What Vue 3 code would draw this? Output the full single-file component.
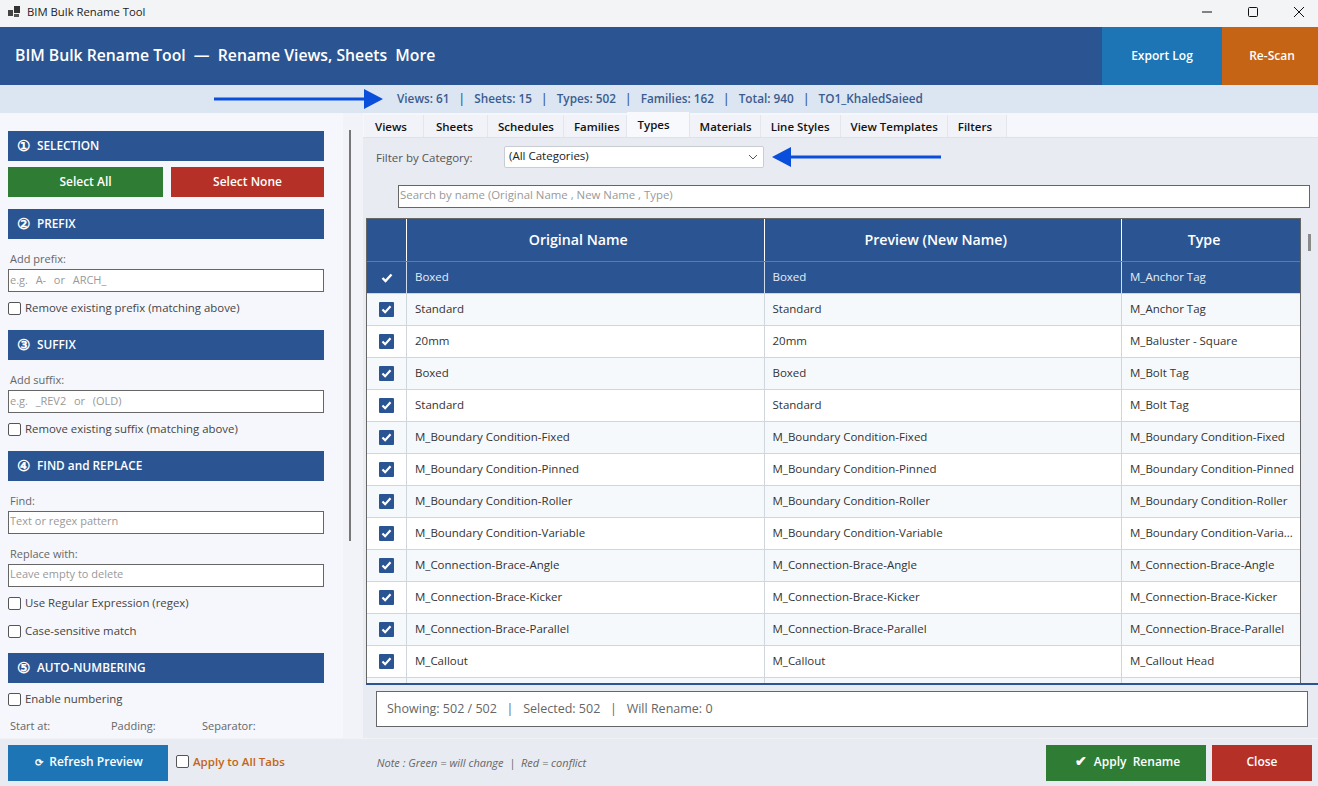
<script setup>
import { ref } from "vue";

const tabs = ["Views", "Sheets", "Schedules", "Families", "Types", "Materials", "Line Styles", "View Templates", "Filters"];
const activeTab = ref("Types");

const rows = [
  ["Boxed", "M_Anchor Tag"],
  ["Standard", "M_Anchor Tag"],
  ["20mm", "M_Baluster - Square"],
  ["Boxed", "M_Bolt Tag"],
  ["Standard", "M_Bolt Tag"],
  ["M_Boundary Condition-Fixed", "M_Boundary Condition-Fixed"],
  ["M_Boundary Condition-Pinned", "M_Boundary Condition-Pinned"],
  ["M_Boundary Condition-Roller", "M_Boundary Condition-Roller"],
  ["M_Boundary Condition-Variable", "M_Boundary Condition-Varia..."],
  ["M_Connection-Brace-Angle", "M_Connection-Brace-Angle"],
  ["M_Connection-Brace-Kicker", "M_Connection-Brace-Kicker"],
  ["M_Connection-Brace-Parallel", "M_Connection-Brace-Parallel"],
  ["M_Callout", "M_Callout Head"],
  ["", ""],
];
</script>

<template>
  <div class="window">
    <div class="titlebar">
      <svg class="app-icon" width="13" height="12" viewBox="0 0 13 12">
        <rect x="0" y="4" width="5" height="6" fill="#444" />
        <rect x="6" y="0" width="6" height="7" fill="#333" />
        <rect x="6" y="8" width="5" height="3" fill="#555" />
      </svg>
      <span class="title-text">BIM Bulk Rename Tool</span>
      <div class="win-controls">
        <svg width="12" height="12" viewBox="0 0 12 12"><path d="M1 6h10" stroke="#111" stroke-width="1" /></svg>
        <svg width="12" height="12" viewBox="0 0 12 12"><rect x="1.5" y="1.5" width="9" height="9" rx="1" fill="none" stroke="#111" /></svg>
        <svg width="12" height="12" viewBox="0 0 12 12"><path d="M1 1l10 10M11 1L1 11" stroke="#111" /></svg>
      </div>
    </div>

    <header class="header">
      <h1 class="header-title">BIM Bulk Rename Tool &nbsp;—&nbsp; Rename Views, Sheets &nbsp;More</h1>
      <button class="head-btn export">Export Log</button>
      <button class="head-btn rescan">Re-Scan</button>
    </header>

    <div class="stats">
      <svg class="arrow-right" width="169" height="20" viewBox="0 0 169 20">
        <path d="M0 8.500h150V0l19 10-19 10v-8.500H0z" fill="#0a4fdb" />
      </svg>
      <span class="stats-text">Views: 61 &nbsp; | &nbsp; Sheets: 15 &nbsp; | &nbsp; Types: 502 &nbsp; | &nbsp; Families: 162 &nbsp; | &nbsp; Total: 940 &nbsp; | &nbsp; TO1_KhaledSaieed</span>
    </div>

    <div class="main">
      <aside class="side">
        <div class="side-inner">
          <div class="sec-head"><span class="num">①</span>SELECTION</div>
          <div class="select-btns">
            <button class="sel-btn green">Select All</button>
            <button class="sel-btn red">Select None</button>
          </div>

          <div class="sec-head prefix"><span class="num">②</span>PREFIX</div>
          <label class="lbl first">Add prefix:</label>
          <input class="field wide-words" placeholder="e.g.  A-  or  ARCH_" />
          <label class="check-row"><span class="box"></span>Remove existing prefix (matching above)</label>

          <div class="sec-head after-check"><span class="num">③</span>SUFFIX</div>
          <label class="lbl first">Add suffix:</label>
          <input class="field wide-words" placeholder="e.g.  _REV2  or  (OLD)" />
          <label class="check-row"><span class="box"></span>Remove existing suffix (matching above)</label>

          <div class="sec-head after-check"><span class="num">④</span>FIND and REPLACE</div>
          <label class="lbl first">Find:</label>
          <input class="field find" placeholder="Text or regex pattern" />
          <label class="lbl second">Replace with:</label>
          <input class="field find" placeholder="Leave empty to delete" />
          <label class="check-row"><span class="box"></span>Use Regular Expression (regex)</label>
          <label class="check-row tight"><span class="box"></span>Case-sensitive match</label>

          <div class="sec-head after-check"><span class="num">⑤</span>AUTO-NUMBERING</div>
          <label class="check-row num-check"><span class="box"></span>Enable numbering</label>
          <div class="num-labels">
            <span>Start at:</span>
            <span>Padding:</span>
            <span>Separator:</span>
          </div>
        </div>
      </aside>

      <div class="side-gutter"><div class="side-thumb"></div></div>

      <section class="content">
        <div class="tabs">
          <div
            v-for="tab in tabs"
            :key="tab"
            class="tab"
            :class="{ active: tab === activeTab }"
          >
            {{ tab }}
          </div>
        </div>

        <div class="panel">
          <div class="filter-row">
            <span class="filter-label">Filter by Category:</span>
            <div class="combo">
              <span>(All Categories)</span>
              <svg width="10" height="6" viewBox="0 0 10 6"><path d="M1 1l4 4 4-4" fill="none" stroke="#555" /></svg>
            </div>
            <svg class="arrow-left" width="169" height="20" viewBox="0 0 169 20">
              <path d="M169 8.500H19V0L0 10l19 10v-8.500h150z" fill="#0a4fdb" />
            </svg>
          </div>

          <div class="search-row">
            <input class="search" placeholder="Search by name (Original Name , New Name , Type)" />
          </div>

          <div class="grid-wrap">
            <div class="grid">
              <div class="grid-head">
                <div class="hcell check-col"></div>
                <div class="hcell name-col">Original Name</div>
                <div class="hcell name-col">Preview (New Name)</div>
                <div class="hcell type-col">Type</div>
              </div>
              <div
                v-for="(row, i) in rows"
                :key="i"
                class="grid-row"
                :class="{ selected: i === 0, alt: i % 2 === 1 }"
              >
                <div class="cell check-col">
                  <svg v-if="i === 0" width="12" height="10" viewBox="0 0 12 10"><path d="M1.500 5l3 3 6-6.500" fill="none" stroke="#fff" stroke-width="2.400" /></svg>
                  <span v-else-if="row[0]" class="tick">
                    <svg width="11" height="9" viewBox="0 0 12 10"><path d="M1.500 5l3 3 6-6.500" fill="none" stroke="#fff" stroke-width="2.400" /></svg>
                  </span>
                </div>
                <div class="cell name-col">{{ row[0] }}</div>
                <div class="cell name-col">{{ row[0] }}</div>
                <div class="cell type-col">{{ row[1] }}</div>
              </div>
            </div>
            <div class="grid-thumb"></div>
          </div>

          <div class="status-wrap">
            <div class="status">Showing: 502 / 502 &nbsp; | &nbsp; Selected: 502 &nbsp; | &nbsp; Will Rename: 0</div>
          </div>
        </div>
      </section>
    </div>

    <footer class="footer">
      <button class="foot-btn refresh"><span class="refresh-icon">⟳</span>Refresh Preview</button>
      <label class="apply-all"><span class="box"></span>Apply to All Tabs</label>
      <span class="note">Note : Green = will change &nbsp;|&nbsp; Red = conflict</span>
      <button class="foot-btn apply"><span class="apply-icon">✔</span>Apply &nbsp;Rename</button>
      <button class="foot-btn close">Close</button>
    </footer>
  </div>
</template>

<style>
html,
body {
  margin: 0;
  overflow: hidden;
}
</style>

<style scoped>
.window {
  width: 1318px;
  height: 786px;
  display: flex;
  flex-direction: column;
  overflow: hidden;
  background: #e8ebf1;
  font-family: "Open Sans", "Liberation Sans", sans-serif;
  font-size: 11.5px;
  color: #333;
}

button {
  border: none;
  padding: 0 0 2px;
  font-family: inherit;
  color: #fff;
  font-weight: 600;
}

.titlebar {
  height: 27px;
  flex: none;
  box-sizing: border-box;
  display: flex;
  align-items: center;
  padding: 0 0 4px 8px;
  background: #f3f4f6;
}
.app-icon {
  margin-right: 6px;
}
.title-text {
  font-size: 11.300px;
  color: #222;
}
.win-controls {
  margin-left: auto;
  display: flex;
  gap: 34px;
  padding-right: 13px;
}

.header {
  height: 58px;
  flex: none;
  display: flex;
  align-items: stretch;
  background: #2b5592;
}
.header-title {
  flex: 1;
  margin: 0;
  padding: 0 0 3px 15px;
  align-self: center;
  font-size: 15.750px;
  font-weight: 600;
  color: #fff;
}
.head-btn {
  font-size: 12px;
}
.export {
  width: 120px;
  background: #1d75b5;
}
.rescan {
  width: 96px;
  padding-left: 4px;
  background: #c56414;
}

.stats {
  height: 28px;
  flex: none;
  box-sizing: border-box;
  display: flex;
  align-items: center;
  padding-left: 214px;
  background: #dce5f2;
}
.arrow-right {
  margin-right: 14px;
}
.stats-text {
  padding-bottom: 2px;
  font-weight: 600;
  font-size: 11.770px;
  color: #3b5c8f;
}

.main {
  flex: 1;
  display: flex;
  min-height: 0;
}

.side {
  width: 343px;
  flex: none;
  background: #f5f7fc;
  overflow: hidden;
}
.side-inner {
  width: 316px;
  margin-left: 8px;
  padding-top: 18px;
  display: flex;
  flex-direction: column;
}
.side-gutter {
  width: 20px;
  flex: none;
  background: #f1f3f8;
}
.side-thumb {
  width: 2px;
  height: 411px;
  margin: 17px 0 0 6px;
  background: #777;
}
.sec-head {
  height: 30px;
  flex: none;
  box-sizing: border-box;
  display: flex;
  align-items: center;
  padding: 0 0 2px 9px;
  background: #2b5592;
  color: #fff;
  font-weight: 600;
  font-size: 11.800px;
}
.num {
  width: 20px;
  font-size: 15px;
  line-height: 1;
}
.select-btns {
  display: flex;
  gap: 8px;
  margin-top: 6px;
}
.sel-btn {
  height: 30px;
  font-size: 12px;
}
.green {
  width: 155px;
  background: #2f7d35;
}
.red {
  width: 153px;
  background: #b53026;
}
.prefix {
  margin-top: 12px;
}
.after-check {
  margin-top: 13px;
}
.lbl {
  height: 16px;
  line-height: 16px;
  padding-left: 2px;
  color: #666;
  font-size: 11px;
}
.lbl.first {
  margin-top: 12px;
  margin-bottom: 2px;
}
.lbl.second {
  margin-top: 12px;
  margin-bottom: 2px;
}
.field {
  height: 23px;
  box-sizing: border-box;
  width: 316px;
  border: 1px solid #666;
  padding: 0 1px 2px;
  background: #fff;
  font-family: inherit;
  font-size: 11px;
  outline: none;
}
.field.find {
  padding-bottom: 4px;
}
.wide-words {
  word-spacing: 1px;
}
.field::placeholder,
.search::placeholder {
  color: #999;
  opacity: 1;
}
.check-row {
  display: flex;
  align-items: center;
  box-sizing: content-box;
  height: 17px;
  padding-bottom: 1px;
  margin-top: 7px;
  color: #444;
  font-size: 11.400px;
  line-height: 16px;
}
.check-row.tight {
  margin-top: 10px;
}
.box {
  width: 11px;
  height: 11px;
  flex: none;
  margin: 1px 4px 0 0;
  border: 1px solid #555;
  border-radius: 2px;
  background: #fff;
}
.num-labels {
  display: grid;
  grid-template-columns: 101px 91px auto;
  margin-top: 10px;
  padding-left: 2px;
  color: #666;
  font-size: 11px;
}

.content {
  flex: 1;
  min-width: 0;
  display: flex;
  flex-direction: column;
  background: #f5f7fc;
}
.tabs {
  height: 25px;
  flex: none;
  display: flex;
  align-items: flex-end;
  box-sizing: border-box;
  padding-left: 1px;
  border-bottom: 1px solid #dfe2e8;
}
.tab {
  height: 22px;
  box-sizing: border-box;
  display: flex;
  align-items: center;
  padding: 1px 10px 0;
  border-right: 1px solid #e3e6ec;
  background: #f1f3f8;
  color: #111;
  font-weight: 600;
  font-size: 11.500px;
}
.tab:nth-child(1) {
  padding-left: 11px;
  padding-right: 16px;
}
.tab:nth-child(2) {
  padding-left: 12px;
  padding-right: 14px;
}
.tab:nth-child(3) {
  padding-right: 9px;
}
.tab:nth-child(4) {
  padding-right: 6px;
}
.tab:nth-child(6) {
  padding-right: 8px;
}
.tab:nth-child(8) {
  padding-right: 9px;
}
.tab:nth-child(9) {
  padding-right: 14px;
}
.tab.active {
  height: 25px;
  background: #f8f9fc;
  padding: 0 19px 1px 11px;
}

.panel {
  flex: 1;
  min-height: 0;
  display: flex;
  flex-direction: column;
  background: #e8ebf1;
}
.filter-row {
  height: 22px;
  flex: none;
  margin-top: 8px;
  display: flex;
  align-items: center;
  padding-left: 13px;
}
.filter-label {
  width: 128px;
  color: #555;
  font-size: 11.500px;
}
.combo {
  width: 260px;
  height: 22px;
  box-sizing: border-box;
  display: flex;
  align-items: center;
  justify-content: space-between;
  padding: 0 5px 3px 4px;
  border: 1px solid #c9ccd2;
  border-radius: 2px;
  background: #fff;
  color: #222;
  font-size: 11.500px;
}
.combo svg {
  margin-top: 3px;
}
.arrow-left {
  margin-left: 8px;
}
.search-row {
  flex: none;
  padding: 17px 8px 0 35px;
}
.search {
  width: 100%;
  height: 23px;
  box-sizing: border-box;
  border: 1px solid #666;
  padding: 0 1px 5px;
  background: #fff;
  font-family: inherit;
  font-size: 11.400px;
  outline: none;
}

.grid-wrap {
  flex: none;
  height: 465px;
  margin-top: 10px;
  margin-left: 3px;
  position: relative;
  overflow: hidden;
  border-bottom: 2px solid #2b5592;
}
.grid {
  width: 935px;
  box-sizing: border-box;
  border: 1px solid #666;
  border-bottom: none;
  background: #fff;
}
.grid-head {
  height: 42px;
  display: flex;
  background: #2b5592;
  border-bottom: 1px solid #777;
}
.hcell {
  display: flex;
  align-items: center;
  justify-content: center;
  box-sizing: border-box;
  padding: 0 14px 2px 0;
  border-right: 1px solid #fff;
  color: #fff;
  font-weight: 600;
  font-size: 14.200px;
}
.hcell:last-child,
.cell:last-child {
  border-right: none;
}
.check-col {
  width: 40px;
  flex: none;
}
.name-col {
  width: 357.500px;
  flex: none;
}
.type-col {
  flex: 1;
  min-width: 0;
}
.grid-row {
  height: 32px;
  box-sizing: border-box;
  display: flex;
  background: #fff;
  border-bottom: 1px solid #cfd6dd;
}
.grid-row.alt {
  background: #f6f9fc;
}
.grid-row.selected {
  background: #2b5592;
  color: #fff;
}
.cell {
  display: flex;
  align-items: center;
  box-sizing: border-box;
  padding: 0 0 2px 8px;
  border-right: 1px solid #cfd6dd;
  color: #333;
  font-size: 11.500px;
  white-space: nowrap;
  overflow: hidden;
}
.selected .cell {
  color: #e6edf7;
  border-right-color: #cfdcec;
}
.cell.check-col {
  justify-content: center;
  padding: 0;
}
.tick {
  width: 15px;
  height: 15px;
  display: flex;
  align-items: center;
  justify-content: center;
  background: #2b5592;
  border-radius: 1px;
}
.grid-thumb {
  position: absolute;
  top: 16px;
  left: 942px;
  width: 3px;
  height: 17px;
  background: #8a8a8a;
}

.status-wrap {
  flex: none;
  padding: 6px 10px 0 13px;
}
.status {
  height: 36px;
  box-sizing: border-box;
  display: flex;
  align-items: center;
  padding: 0 0 1px 10px;
  border: 1px solid #666;
  background: #fff;
  color: #666;
  font-size: 12.500px;
}

.footer {
  height: 48px;
  flex: none;
  display: flex;
  align-items: center;
  padding: 0 6px 0 8px;
  border-top: 1px solid #f0f2f6;
  box-sizing: border-box;
  background: #e8ebf1;
}
.foot-btn {
  height: 36px;
  font-size: 12px;
}
.refresh {
  width: 160px;
  padding-left: 2px;
  background: #1d75b5;
}
.refresh-icon {
  margin-right: 6px;
  font-size: 10px;
}
.apply-all {
  display: flex;
  align-items: center;
  margin-left: 8px;
  padding-bottom: 3px;
  color: #c56414;
  font-weight: 600;
  font-size: 11.500px;
}
.note {
  margin-left: 92px;
  color: #666;
  font-style: italic;
  font-size: 11px;
}
.apply {
  width: 160px;
  margin-left: auto;
  padding-left: 3px;
  background: #2f7d35;
}
.apply-icon {
  margin-right: 7px;
  font-size: 14px;
  line-height: 1;
}
.close {
  width: 100px;
  margin-left: 6px;
  background: #b53026;
}
</style>
